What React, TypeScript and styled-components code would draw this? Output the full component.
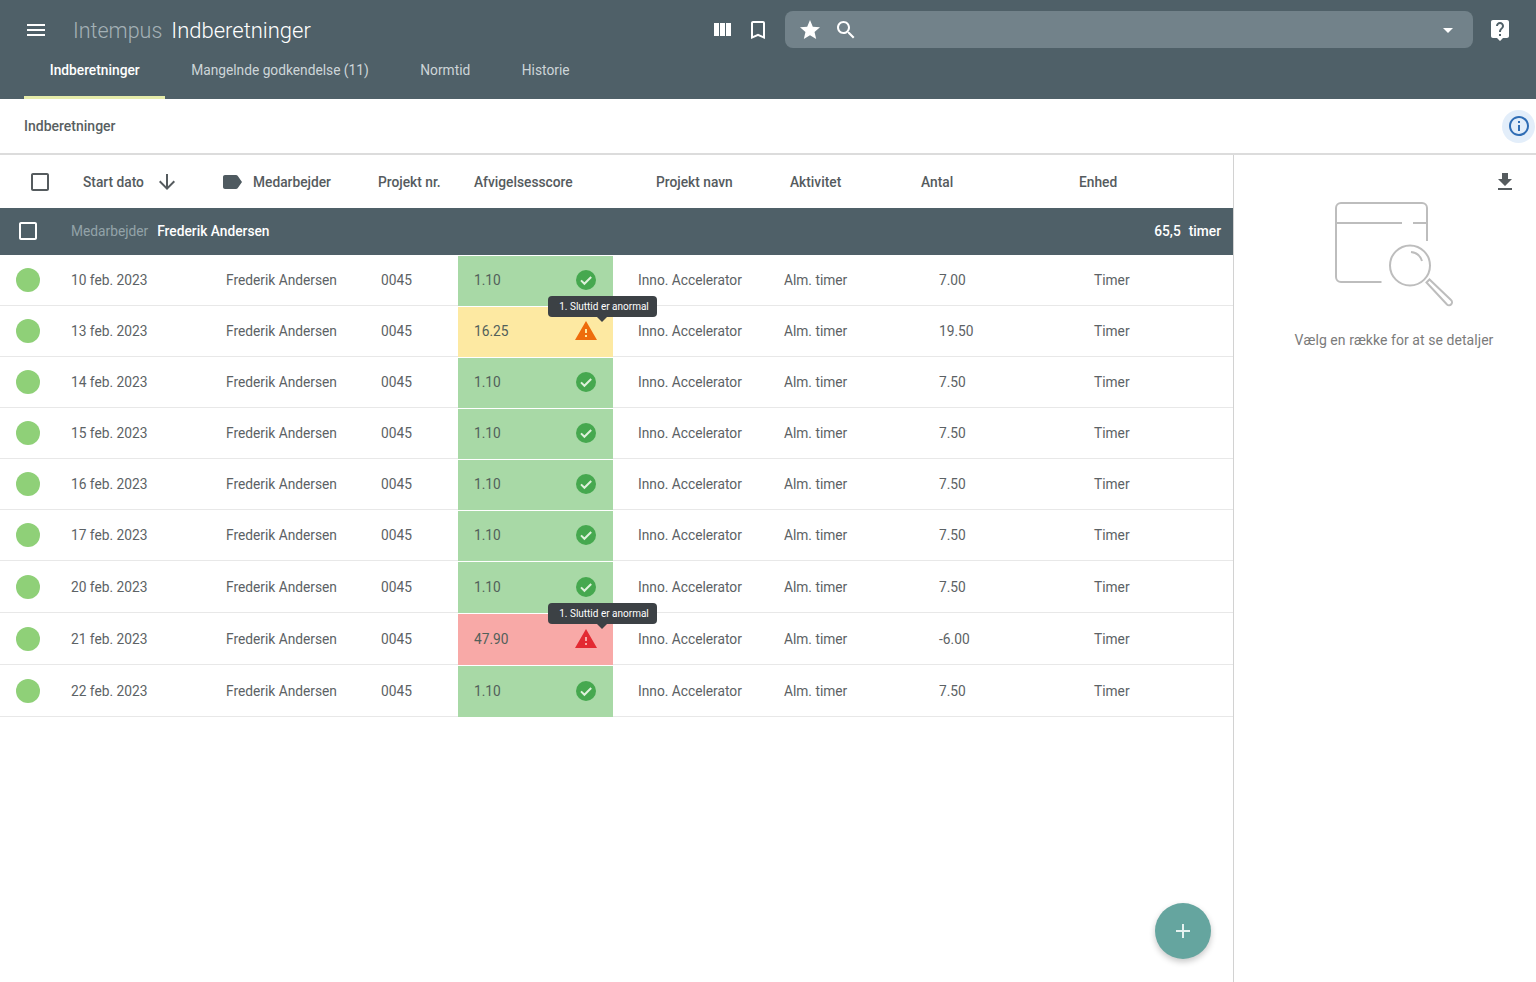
import React from "react";
import styled, { createGlobalStyle } from "styled-components";

const Global = createGlobalStyle`
  html, body { margin: 0; padding: 0; background: #fff; height: 982px; overflow: hidden; }
  body { font-family: Roboto, "Liberation Sans", sans-serif; }
  * { box-sizing: border-box; }
`;

const P = {
  menu: "M3 18h18v-2H3v2zm0-5h18v-2H3v2zm0-7v2h18V6H3z",
  week: "M10 18h5V5h-5v13zm-6 0h5V5H4v13zM16 5v13h5V5h-5z",
  bookmark: "M17 3H7c-1.1 0-1.99.9-1.99 2L5 21l7-3 7 3V5c0-1.1-.9-2-2-2zm0 15l-5-2.18L7 18V5h10v13z",
  star: "M12 17.27L18.18 21l-1.64-7.03L22 9.24l-7.19-.61L12 2 9.19 8.63 2 9.24l5.46 4.73L5.82 21z",
  search: "M15.5 14h-.79l-.28-.27C15.41 12.59 16 11.11 16 9.5 16 5.91 13.09 3 9.5 3S3 5.91 3 9.5 5.91 16 9.5 16c1.61 0 3.09-.59 4.23-1.57l.27.28v.79l5 4.99L20.49 19l-4.99-5zm-6 0C7.01 14 5 11.99 5 9.5S7.01 5 9.5 5 14 7.01 14 9.5 11.99 14 9.5 14z",
  drop: "M7 10l5 5 5-5z",
  help: "M19 2H5c-1.11 0-2 .9-2 2v14c0 1.1.89 2 2 2h4l3 3 3-3h4c1.1 0 2-.9 2-2V4c0-1.1-.9-2-2-2zm-6 16h-2v-2h2v2zm2.07-7.75l-.9.92C13.45 11.9 13 12.5 13 14h-2v-.5c0-1.1.45-2.1 1.17-2.83l1.24-1.26c.37-.36.59-.86.59-1.41 0-1.1-.9-2-2-2s-2 .9-2 2H8c0-2.21 1.79-4 4-4s4 1.79 4 4c0 .88-.36 1.68-.93 2.25z",
  label: "M17.63 5.84C17.27 5.33 16.67 5 16 5L5 5.01C3.9 5.01 3 5.9 3 7v10c0 1.1.9 1.99 2 1.99L16 19c.67 0 1.27-.33 1.63-.84L22 12l-4.37-6.16z",
  down: "M20 12l-1.41-1.41L13 16.17V4h-2v12.17l-5.58-5.59L4 12l8 8 8-8z",
  download: "M19 9h-4V3H9v6H5l7 7 7-7zM5 18v2h14v-2H5z",
  warning: "M1 21h22L12 2 1 21zm12-3h-2v-2h2v2zm0-4h-2v-4h2v4z",
  box: "M19 5v14H5V5h14m0-2H5c-1.1 0-2 .9-2 2v14c0 1.1.9 2 2 2h14c1.1 0 2-.9 2-2V5c0-1.1-.9-2-2-2z",
  info: "M11 7h2v2h-2zm0 4h2v6h-2zm1-9C6.48 2 2 6.48 2 12s4.48 10 10 10 10-4.48 10-10S17.52 2 12 2zm0 18c-4.41 0-8-3.59-8-8s3.59-8 8-8 8 3.59 8 8-3.59 8-8 8z",
  add: "M19 13h-6v6h-2v-6H5v-2h6V5h2v6h6v2z",
};

const Svg = styled.svg<{ $size: number; $color: string }>`
  display: block;
  flex: none;
  width: ${(p) => p.$size}px;
  height: ${(p) => p.$size}px;
  fill: ${(p) => p.$color};
`;

const Icon = ({ d, size = 24, color = "#fff" }: { d: string; size?: number; color?: string }) => (
  <Svg viewBox="0 0 24 24" $size={size} $color={color}>
    <path d={d} />
  </Svg>
);

const CheckCircle = () => (
  <Svg viewBox="0 0 24 24" $size={24} $color="#46a84f">
    <circle cx="12" cy="12" r="10" />
    <path d="M7 12.4l3.4 3.4L17.2 9" fill="none" stroke="#dff2dc" strokeWidth="2" />
  </Svg>
);

const Page = styled.div`
  width: 1536px;
  height: 982px;
  display: flex;
  flex-direction: column;
  overflow: hidden;
  position: relative;
`;

const Header = styled.header`
  height: 99px;
  flex: none;
  background: #4f6068;
  display: flex;
  flex-direction: column;
  padding-left: 24px;
`;

const TopBar = styled.div`
  height: 60px;
  display: flex;
  align-items: center;
  padding-right: 24px;
`;

const Title = styled.div`
  margin-left: 25px;
  font-size: 22px;
  font-weight: 300;
  color: #fff;
  white-space: nowrap;
  display: flex;
  align-items: baseline;
  gap: 9px;
`;

const Brand = styled.span`
  color: #a4b1b6;
  font-size: 21.5px;
`;

const TopIcons = styled.div`
  margin-left: auto;
  display: flex;
  align-items: center;
  gap: 12px;
`;

const SearchBar = styled.div`
  width: 688px;
  height: 37px;
  margin: 0 15px 1px 15px;
  background: #72828a;
  border-radius: 8px;
  display: flex;
  align-items: center;
  padding: 0 13px;
  gap: 12px;
`;

const DropIcon = styled.div`
  margin-left: auto;
`;

const Tabs = styled.nav`
  height: 39px;
  display: flex;
`;

const Tab = styled.div<{ $active?: boolean }>`
  position: relative;
  height: 39px;
  padding: 0 25.75px;
  padding-bottom: 16px;
  display: flex;
  align-items: center;
  font-size: 13.75px;
  font-weight: ${(p) => (p.$active ? 500 : 400)};
  color: ${(p) => (p.$active ? "#fff" : "#cdd5d8")};
  border-bottom: 3px solid ${(p) => (p.$active ? "#e6ecaa" : "transparent")};
  border-radius: 3px 3px 0 0;
  white-space: nowrap;
`;

const SectionBar = styled.div`
  height: 56px;
  flex: none;
  display: flex;
  align-items: center;
  justify-content: space-between;
  padding-left: 24px;
  border-bottom: 2px solid #dcdcdc;
  font-size: 14px;
  font-weight: 500;
  color: #595f62;
`;

const InfoHalo = styled.div`
  width: 33px;
  height: 33px;
  margin-right: 1px;
  border-radius: 50%;
  background: #e3eefa;
  display: flex;
  align-items: center;
  justify-content: center;
`;

const Body = styled.main`
  flex: 1;
  display: grid;
  grid-template-columns: 1233px 1fr;
  min-height: 0;
`;

const TableArea = styled.section`
  display: flex;
  flex-direction: column;
`;

const HeadRow = styled.div`
  height: 53px;
  flex: none;
  display: grid;
  grid-template-columns: 83px 139px 156px 96px 182px 134px 131px 158px 1fr;
  align-items: center;
  font-size: 13.75px;
  font-weight: 500;
  color: #555b5e;
  white-space: nowrap;
`;

const HeadCheck = styled.div`
  padding-left: 28px;
`;

const HeadCell = styled.div`
  display: flex;
  align-items: center;
`;

const SortWrap = styled.span`
  margin-left: 11px;
`;

const TagWrap = styled.span`
  margin: 0 9px 0 -2px;
`;

const GroupRow = styled.div`
  height: 47px;
  flex: none;
  background: #4f6068;
  display: flex;
  align-items: center;
  padding: 0 12px 2px 16px;
  font-size: 13.75px;
  color: #fff;
  white-space: nowrap;
`;

const GroupLabel = styled.span`
  margin-left: 31px;
  color: #93a3a9;
`;

const GroupName = styled.span`
  margin-left: 9px;
  font-weight: 500;
`;

const GroupTotal = styled.span`
  margin-left: auto;
  display: flex;
  gap: 8px;
  font-weight: 500;
`;

const Row = styled.div<{ $tall: boolean }>`
  height: ${(p) => (p.$tall ? 52 : 51)}px;
  flex: none;
  display: grid;
  grid-template-columns: 71px 155px 155px 77px 155px 171px 155px 155px 1fr;
  align-items: center;
  border-bottom: 1px solid #e8e8e8;
  font-size: 13.75px;
  color: #5c6265;
  white-space: nowrap;
`;

const Dot = styled.div`
  width: 24px;
  height: 24px;
  margin-left: 16px;
  border-radius: 50%;
  background: #8fd078;
`;

const tones = {
  ok: "#a8d9a6",
  warn: "#fde9a2",
  bad: "#f8a9a7",
};

const ScoreCell = styled.div<{ $tone: keyof typeof tones }>`
  position: relative;
  height: 100%;
  display: flex;
  align-items: center;
  justify-content: space-between;
  padding: 0 15px 1px 16px;
  margin-bottom: -1px;
  background: ${(p) => tones[p.$tone]};
  color: #52605a;
`;

const ProjectName = styled.div`
  padding-left: 25px;
`;

const Tooltip = styled.div`
  position: absolute;
  z-index: 2;
  left: 90px;
  top: -10.5px;
  width: 109px;
  height: 21px;
  padding-left: 3px;
  border-radius: 4px;
  background: #3c4145;
  color: #fff;
  font-size: 10px;
  display: flex;
  align-items: center;
  justify-content: center;
  &::after {
    content: "";
    position: absolute;
    left: 49px;
    bottom: -5px;
    border-left: 5px solid transparent;
    border-right: 5px solid transparent;
    border-top: 5px solid #3c4145;
  }
`;

const Side = styled.aside`
  border-left: 1px solid #d2d2d2;
  display: flex;
  flex-direction: column;
  align-items: center;
  padding: 15px 19px 0 37px;
`;

const DownloadRow = styled.div`
  align-self: flex-end;
`;

const Illustration = styled.svg`
  display: block;
  width: 118px;
  height: 106px;
  margin-top: 8px;
  fill: none;
  stroke: #bdbdbd;
  stroke-width: 2;
`;

const Hint = styled.div`
  margin-top: 24px;
  font-size: 14px;
  color: #7b7b7b;
  letter-spacing: 0.06px;
  white-space: nowrap;
`;

const Fab = styled.button`
  position: absolute;
  left: 1155px;
  top: 903px;
  width: 56px;
  height: 56px;
  border: 0;
  padding: 0;
  border-radius: 50%;
  background: #65a59f;
  box-shadow: 0 3px 6px rgba(0, 0, 0, 0.22);
  display: flex;
  align-items: center;
  justify-content: center;
`;

type Tone = keyof typeof tones;
const rows: { date: string; score: string; amount: string; tone: Tone }[] = [
  { date: "10 feb. 2023", score: "1.10", amount: "7.00", tone: "ok" },
  { date: "13 feb. 2023", score: "16.25", amount: "19.50", tone: "warn" },
  { date: "14 feb. 2023", score: "1.10", amount: "7.50", tone: "ok" },
  { date: "15 feb. 2023", score: "1.10", amount: "7.50", tone: "ok" },
  { date: "16 feb. 2023", score: "1.10", amount: "7.50", tone: "ok" },
  { date: "17 feb. 2023", score: "1.10", amount: "7.50", tone: "ok" },
  { date: "20 feb. 2023", score: "1.10", amount: "7.50", tone: "ok" },
  { date: "21 feb. 2023", score: "47.90", amount: "-6.00", tone: "bad" },
  { date: "22 feb. 2023", score: "1.10", amount: "7.50", tone: "ok" },
];

export default function App() {
  return (
    <Page>
      <Global />
      <Header>
        <TopBar>
          <Icon d={P.menu} />
          <Title>
            <Brand>Intempus</Brand>
            <span>Indberetninger</span>
          </Title>
          <TopIcons>
            <Icon d={P.week} />
            <Icon d={P.bookmark} />
          </TopIcons>
          <SearchBar>
            <Icon d={P.star} />
            <Icon d={P.search} />
            <DropIcon>
              <Icon d={P.drop} />
            </DropIcon>
          </SearchBar>
          <Icon d={P.help} />
        </TopBar>
        <Tabs>
          <Tab $active>Indberetninger</Tab>
          <Tab>Mangelnde godkendelse (11)</Tab>
          <Tab>Normtid</Tab>
          <Tab>Historie</Tab>
        </Tabs>
      </Header>
      <SectionBar>
        Indberetninger
        <InfoHalo>
          <Icon d={P.info} color="#2f6db5" />
        </InfoHalo>
      </SectionBar>
      <Body>
        <TableArea>
          <HeadRow>
            <HeadCheck>
              <Icon d={P.box} color="#555b5e" />
            </HeadCheck>
            <HeadCell>
              Start dato
              <SortWrap>
                <Icon d={P.down} color="#555b5e" />
              </SortWrap>
            </HeadCell>
            <HeadCell>
              <TagWrap>
                <Icon d={P.label} color="#4f5a60" />
              </TagWrap>
              Medarbejder
            </HeadCell>
            <HeadCell>Projekt nr.</HeadCell>
            <HeadCell>Afvigelsesscore</HeadCell>
            <HeadCell>Projekt navn</HeadCell>
            <HeadCell>Aktivitet</HeadCell>
            <HeadCell>Antal</HeadCell>
            <HeadCell>Enhed</HeadCell>
          </HeadRow>
          <GroupRow>
            <Icon d={P.box} />
            <GroupLabel>Medarbejder</GroupLabel>
            <GroupName>Frederik Andersen</GroupName>
            <GroupTotal>
              <span>65,5</span>
              <span>timer</span>
            </GroupTotal>
          </GroupRow>
          {rows.map((r, i) => (
            <Row key={r.date} $tall={i >= 6}>
              <Dot />
              <div>{r.date}</div>
              <div>Frederik Andersen</div>
              <div>0045</div>
              <ScoreCell $tone={r.tone}>
                {r.score}
                {r.tone === "ok" ? (
                  <CheckCircle />
                ) : (
                  <Icon d={P.warning} color={r.tone === "warn" ? "#ee6c0c" : "#e32a32"} />
                )}
                {r.tone !== "ok" && <Tooltip>1. Sluttid er anormal</Tooltip>}
              </ScoreCell>
              <ProjectName>Inno. Accelerator</ProjectName>
              <div>Alm. timer</div>
              <div>{r.amount}</div>
              <div>Timer</div>
            </Row>
          ))}
        </TableArea>
        <Side>
          <DownloadRow>
            <Icon d={P.download} color="#555b5e" />
          </DownloadRow>
          <Illustration viewBox="0 0 118 106">
            <path d="M46.500 80H6a5 5 0 0 1-5-5V6a5 5 0 0 1 5-5h81a5 5 0 0 1 5 5v33" />
            <path d="M1 21h66M78 21h14" />
            <circle cx="75" cy="63.500" r="20" />
            <path d="M76 50a13 13 0 0 1 11 9" />
            <path d="M91.500 80.500l3-3 21.500 20.500a3 3 0 0 1-4 4.500z" />
          </Illustration>
          <Hint>Vælg en række for at se detaljer</Hint>
        </Side>
      </Body>
      <Fab aria-label="Tilføj">
        <Icon d={P.add} color="#e6f2f0" />
      </Fab>
    </Page>
  );
}
